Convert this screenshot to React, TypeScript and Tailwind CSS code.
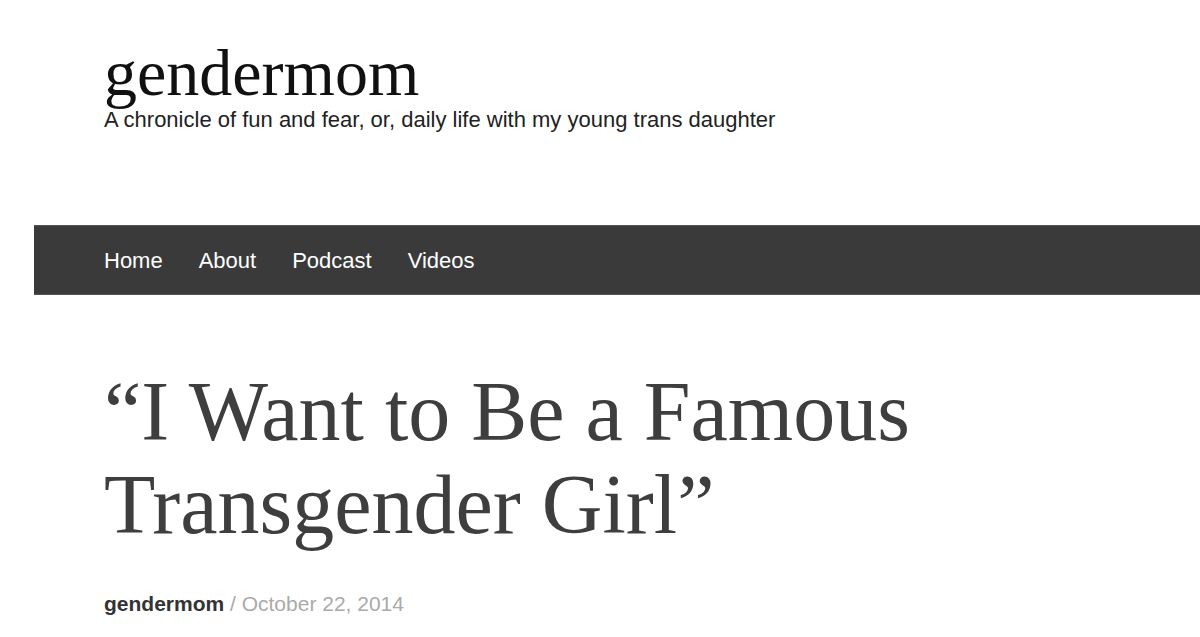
export default function App() {
  return (
    <div className="min-h-[637px] w-[1200px] overflow-hidden bg-white">
      <header className="pl-[104px] pt-[40px]">
        <h1 className="font-['Liberation_Serif','Times_New_Roman',serif] text-[66px] leading-[66px] text-[#111]">gendermom</h1>
        <p className="mt-[2px] font-['Liberation_Sans',Arial,sans-serif] text-[22px] leading-[24px] text-[#222]">
          A chronicle of fun and fear, or, daily life with my young trans daughter
        </p>
      </header>
      <nav className="ml-[34px] mt-[93px] flex h-[70px] items-center gap-[36px] border-y border-[#555] bg-[#3a3a3a] pl-[70px] font-['Liberation_Sans',Arial,sans-serif] text-[22px] text-white">
        <a>Home</a>
        <a>About</a>
        <a>Podcast</a>
        <a>Videos</a>
      </nav>
      <main className="pl-[104px] pt-[70px]">
        <h2 className="font-['Liberation_Serif','Times_New_Roman',serif] text-[84px] leading-[93px] text-[#3e3e3e]">
          “I Want to Be a Famous
          <br />
          Transgender Girl”
        </h2>
        <p className="mt-[39px] font-['Liberation_Sans',Arial,sans-serif] text-[21px] leading-[28px] text-[#aaa]">
          <span className="font-bold text-[#333]">gendermom</span> / October 22, 2014
        </p>
      </main>
    </div>
  );
}
